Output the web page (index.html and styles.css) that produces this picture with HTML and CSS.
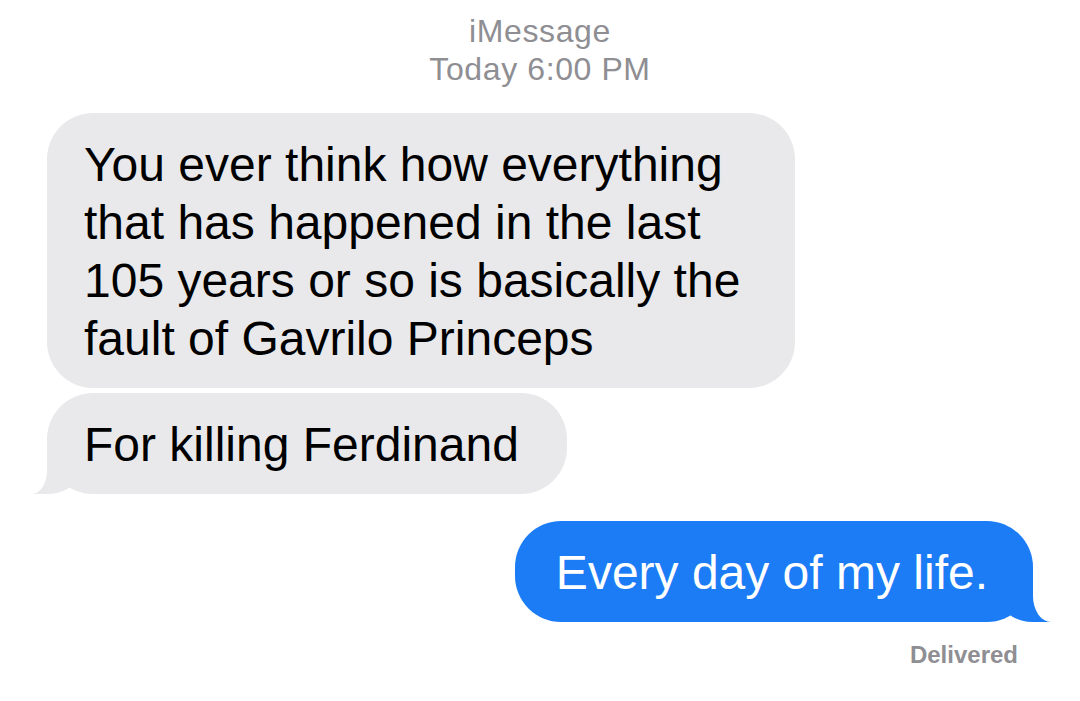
FILE: index.html
```html
<!DOCTYPE html>
<html lang="en">
<head>
<meta charset="utf-8">
<title>iMessage</title>
<link rel="stylesheet" href="styles.css">
</head>
<body>
<main class="thread">
  <header class="thread-head">
    <div class="service">iMessage</div>
    <div class="stamp">Today 6:00 PM</div>
  </header>
  <section class="messages">
    <div class="bubble them first">You ever think how everything that has happened in the last 105 years or so is basically the fault of Gavrilo Princeps</div>
    <div class="bubble them tail">For killing Ferdinand</div>
    <div class="bubble me tail">Every day of my life.</div>
    <div class="status">Delivered</div>
  </section>
</main>
</body>
</html>
```
FILE: styles.css
```css
* { box-sizing: border-box; }
html, body { margin: 0; padding: 0; background: #ffffff; }
body {
  width: 1080px;
  height: 701px;
  overflow: hidden;
  font-family: "Liberation Sans", Arial, sans-serif;
  color: #000;
}
.thread { display: flex; flex-direction: column; }
.thread-head {
  padding-top: 12px;
  display: flex;
  flex-direction: column;
  align-items: center;
  color: #8e8e93;
  font-size: 32px;
  line-height: 38px;
  letter-spacing: 0.6px;
}
.messages {
  display: flex;
  flex-direction: column;
  padding: 25px 47px 0 47px;
}
.bubble {
  position: relative;
  max-width: 748px;
  width: fit-content;
  font-size: 48px;
  line-height: 58px;
  padding: 23px 48px 20px 37px;
  border-radius: 46px;
}
.them {
  background: #e9e9eb;
  color: #000;
  align-self: flex-start;
}
.them + .them { margin-top: 5px; }
.me {
  background: #1b7cf6;
  color: #fff;
  align-self: flex-end;
  margin-top: 27px;
  padding-left: 41px;
  padding-right: 45px;
}
.them.tail::before {
  content: "";
  position: absolute;
  left: -15px;
  bottom: 0;
  width: 45px;
  height: 48px;
  background: #e9e9eb;
  border-bottom-right-radius: 30px 20px;
}
.them.tail::after {
  content: "";
  position: absolute;
  left: -40px;
  bottom: 0;
  width: 40px;
  height: 48px;
  background: #ffffff;
  border-bottom-right-radius: 15px 24px;
}
.me.tail::before {
  content: "";
  position: absolute;
  right: -18px;
  bottom: 0;
  width: 48px;
  height: 48px;
  background: #1b7cf6;
  border-bottom-left-radius: 30px 20px;
}
.me.tail::after {
  content: "";
  position: absolute;
  right: -44px;
  bottom: 0;
  width: 44px;
  height: 48px;
  background: #ffffff;
  border-bottom-left-radius: 18px 26px;
}
.status {
  align-self: flex-end;
  margin-top: 19px;
  margin-right: 15px;
  font-size: 24px;
  line-height: 28px;
  font-weight: 700;
  color: #8e8e93;
}
```
